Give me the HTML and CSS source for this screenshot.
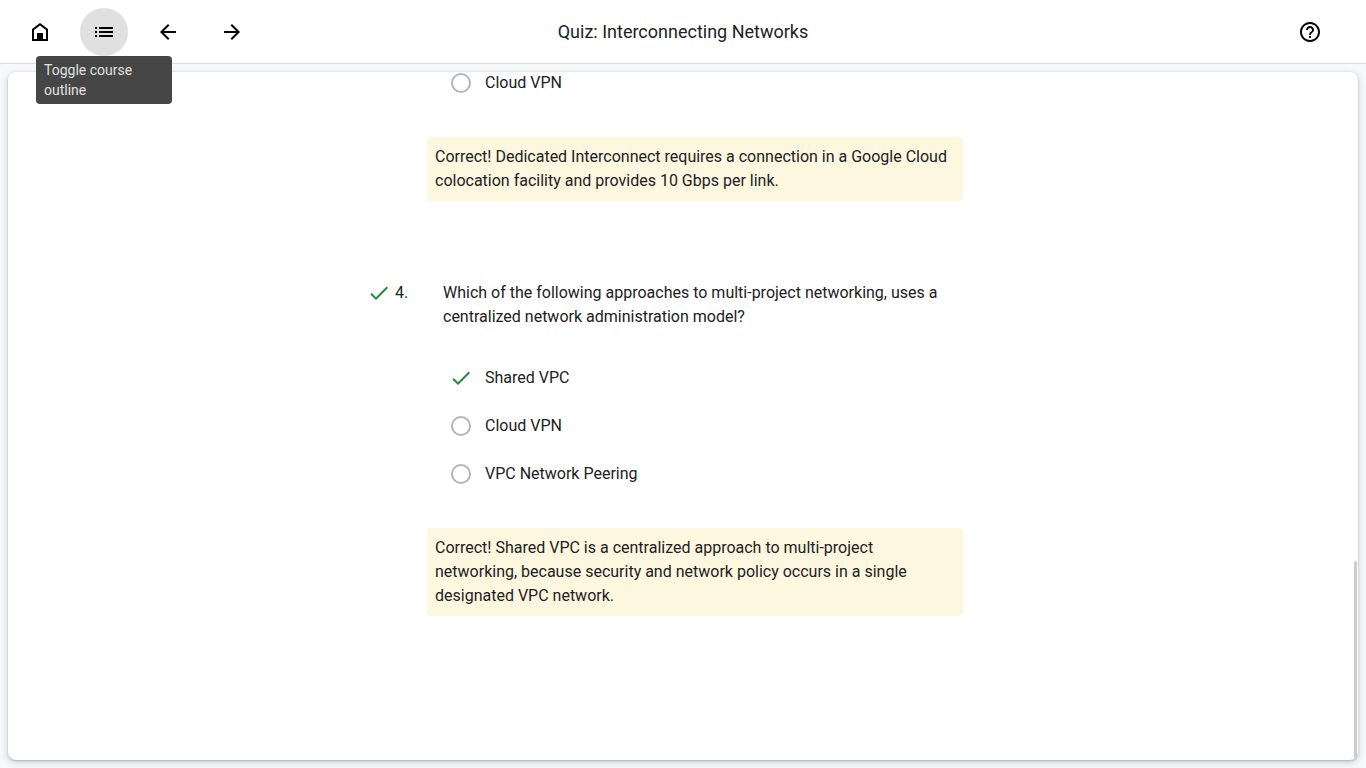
FILE: index.html
```html
<!DOCTYPE html>
<html lang="en">
<head>
<meta charset="utf-8">
<meta name="viewport" content="width=device-width, initial-scale=1">
<title>Quiz: Interconnecting Networks</title>
<link rel="stylesheet" href="styles.css">
</head>
<body>
<header class="toolbar">
  <nav class="toolbar-nav" aria-label="Course navigation">
    <button class="icon-button" type="button" aria-label="Home">
      <svg class="icon" viewBox="0 0 24 24"><path d="M12 3 4 9v12h16V9zM6 10l6-4.500 6 4.500v9H6z" fill-rule="evenodd"/><path d="M9 13h6v6H9z"/></svg>
    </button>
    <div class="tooltip-anchor">
      <button class="icon-button icon-button-active" type="button" aria-label="Toggle course outline" aria-describedby="outline-tip">
        <svg class="icon" viewBox="0 0 24 24"><path d="M3 7h2v2H3zM7 7h14v2H7zM3 11h2v2H3zM7 11h14v2H7zM3 15h2v2H3zM7 15h14v2H7z"/></svg>
      </button>
      <div class="tooltip" id="outline-tip" role="tooltip">Toggle course outline</div>
    </div>
    <button class="icon-button" type="button" aria-label="Previous">
      <svg class="icon" viewBox="0 0 24 24"><path d="M20 11H7.830l5.590-5.590L12 4l-8 8 8 8 1.410-1.410L7.830 13H20z"/></svg>
    </button>
    <button class="icon-button" type="button" aria-label="Next">
      <svg class="icon" viewBox="0 0 24 24"><path d="M4 11h12.170l-5.590-5.590L12 4l8 8-8 8-1.410-1.410L16.170 13H4z"/></svg>
    </button>
  </nav>
  <h1 class="toolbar-title">Quiz: Interconnecting Networks</h1>
  <button class="icon-button help-button" type="button" aria-label="Help">
    <svg class="icon" viewBox="0 0 24 24"><path d="M11 18h2v-2h-2v2zm1-16C6.480 2 2 6.480 2 12s4.480 10 10 10 10-4.480 10-10S17.520 2 12 2zm0 18c-4.410 0-8-3.590-8-8s3.590-8 8-8 8 3.590 8 8-3.590 8-8 8zm0-14c-2.210 0-4 1.790-4 4h2c0-1.100.9-2 2-2s2 .9 2 2c0 2-3 1.750-3 5h2c0-2.250 3-2.500 3-5 0-2.210-1.790-4-4-4z"/></svg>
  </button>
</header>
<main class="card">
  <div class="quiz">
    <section class="question">
      <div class="answers">
        <label class="option"><span class="marker"><input class="radio" type="radio" name="q3" disabled></span>Cloud VPN</label>
        <p class="feedback">Correct! Dedicated Interconnect requires a connection in a Google Cloud colocation facility and provides 10 Gbps per link.</p>
      </div>
    </section>
    <section class="question">
      <div class="prompt">
        <svg class="check" viewBox="0 0 24 24" role="img" aria-label="Correct"><path d="M9 16.170 4.830 12l-1.420 1.410L9 19 21 7l-1.410-1.410z"/></svg>
        <span class="number">4.</span>
        <h2 class="prompt-text">Which of the following approaches to multi-project networking, uses a centralized network administration model?</h2>
      </div>
      <div class="answers">
        <div class="option"><span class="marker"><svg class="check" viewBox="0 0 24 24" role="img" aria-label="Correct"><path d="M9 16.170 4.830 12l-1.420 1.410L9 19 21 7l-1.410-1.410z"/></svg></span>Shared VPC</div>
        <label class="option"><span class="marker"><input class="radio" type="radio" name="q4" disabled></span>Cloud VPN</label>
        <label class="option"><span class="marker"><input class="radio" type="radio" name="q4" disabled></span>VPC Network Peering</label>
        <p class="feedback">Correct! Shared VPC is a centralized approach to multi-project networking, because security and network policy occurs in a single designated VPC network.</p>
      </div>
    </section>
  </div>
  <div class="scroll-thumb"></div>
</main>
</body>
</html>
```
FILE: styles.css
```css
* {
  box-sizing: border-box;
}

body {
  display: flex;
  flex-direction: column;
  height: 100vh;
  margin: 0;
  background: #f8f9fa;
  color: #202124;
  font: 16px/24px Roboto, sans-serif;
}

.toolbar {
  display: grid;
  grid-template-columns: 1fr auto 1fr;
  align-items: center;
  flex: none;
  height: 64px;
  padding: 0 16px;
  border-bottom: 1px solid #dadce0;
  background: #fff;
}

.toolbar-nav {
  display: flex;
  gap: 16px;
}

.toolbar-title {
  margin: 0;
  font-size: 18px;
  font-weight: 400;
  line-height: 24px;
}

.icon-button {
  display: flex;
  align-items: center;
  justify-content: center;
  width: 48px;
  height: 48px;
  padding: 0;
  border: 0;
  border-radius: 50%;
  background: transparent;
  color: #000;
}

.icon-button-active {
  background: #e0e0e0;
}

.help-button {
  justify-self: end;
  margin-right: 16px;
}

.icon {
  width: 24px;
  height: 24px;
  fill: currentColor;
}

.tooltip-anchor {
  position: relative;
}

.tooltip {
  position: absolute;
  z-index: 2;
  top: 100%;
  left: -44px;
  width: 136px;
  padding: 4px 8px;
  border-radius: 4px;
  background: rgba(50, 50, 50, 0.9);
  color: #e0e0e0;
  font-size: 14px;
  line-height: 20px;
}

.card {
  position: relative;
  display: flex;
  flex: 1;
  flex-direction: column;
  justify-content: flex-end;
  min-height: 0;
  margin: 8px;
  padding-bottom: 144px;
  overflow: hidden;
  border-radius: 8px;
  background: #fff;
  box-shadow: 0 1px 2px rgba(60, 64, 67, 0.3), 0 2px 6px 2px rgba(60, 64, 67, 0.15);
}

.quiz {
  display: flex;
  flex-direction: column;
  gap: 80px;
  width: 100%;
  max-width: 632px;
  margin: 0 auto;
}

.prompt {
  display: grid;
  grid-template-columns: 24px 44px 1fr;
  column-gap: 4px;
  padding-right: 36px;
  margin-bottom: 25px;
}

.prompt-text {
  margin: 0;
  font-size: 16px;
  font-weight: 400;
}

.answers {
  padding: 0 36px 0 60px;
}

.check {
  display: block;
  width: 24px;
  height: 24px;
  fill: #1e8e3e;
}

.option {
  display: flex;
  align-items: center;
  gap: 12px;
  height: 48px;
  padding-left: 22px;
}

.marker {
  display: flex;
  align-items: center;
  justify-content: center;
  width: 24px;
  height: 24px;
}

.radio {
  width: 20px;
  height: 20px;
  margin: 0;
  appearance: none;
  border: 2px solid #b5b5b5;
  border-radius: 50%;
}

.feedback {
  margin: 30px 0 0;
  padding: 8px;
  border-radius: 4px;
  background: #fef7e0;
}

.scroll-thumb {
  position: absolute;
  right: 1px;
  bottom: 1px;
  width: 3px;
  height: 198px;
  border-radius: 2px;
  background: #ccc;
}
```
